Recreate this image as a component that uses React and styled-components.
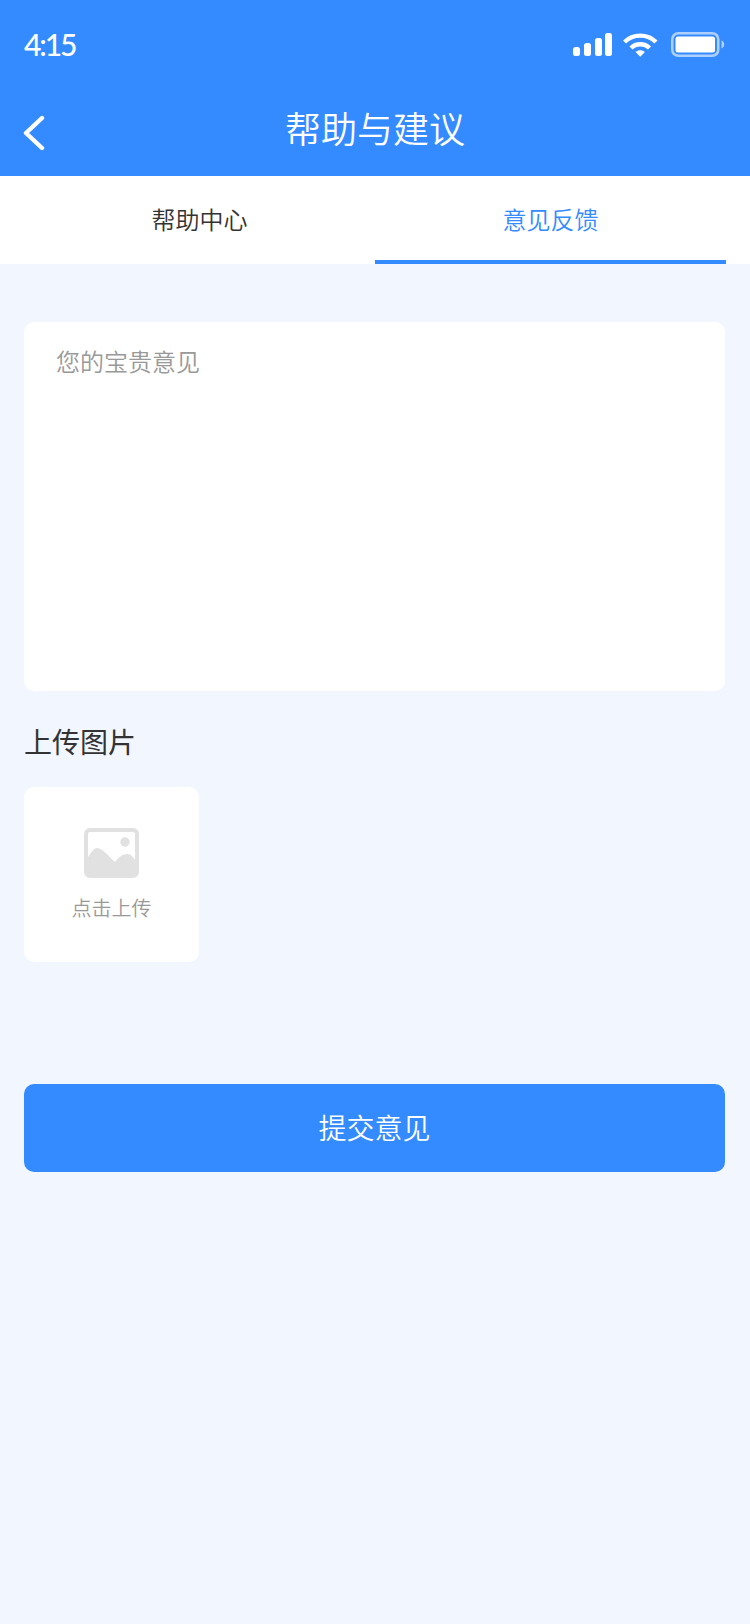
import React, { useState } from "react";
import styled, { createGlobalStyle } from "styled-components";

const Global = createGlobalStyle`
  html, body { margin: 0; padding: 0; background: #f2f6ff; }
  * { box-sizing: border-box; }
  body { font-family: "Noto Sans CJK SC", "Noto Sans", sans-serif; }
`;
const Page = styled.div`
  width: 750px; min-height: 1624px; background: #f2f6ff; display: flex; flex-direction: column;
`;
const Header = styled.header`
  height: 176px; background: #348bff; color: #fff; display: flex; flex-direction: column;
`;
const StatusBar = styled.div`
  height: 88px; padding: 0 25px 0 24px; display: flex; align-items: center; justify-content: space-between;
`;
const Time = styled.span`
  font-family: "Lato", sans-serif; font-size: 30px; font-weight: 500; letter-spacing: -2.1px; line-height: 1;
`;
const StatusIcons = styled.div`
  display: flex; align-items: center; gap: 11px; padding-top: 1px;
`;
const NavBar = styled.div`
  flex: 1; position: relative; display: flex; align-items: center; justify-content: center;
`;
const BackButton = styled.button`
  position: absolute; left: 23px; top: 27px; width: 22px; height: 36px; padding: 0; border: 0; background: none; display: flex;
`;
const Title = styled.h1`
  margin: -9px 0 0; font-size: 36px; font-weight: 350; line-height: 1.2;
`;
const Tabs = styled.nav`
  height: 88px; padding: 0 24px; background: #fff; display: grid; grid-template-columns: 1fr 1fr;
`;
const Tab = styled.button`
  border: 0; background: none; padding: 0;
  font: 350 24px "Noto Sans CJK SC", sans-serif; color: ${p => (p.$active ? "#348bff" : "#333")};
  border-bottom: 4px solid ${p => (p.$active ? "#348bff" : "transparent")};
`;
const Content = styled.main`
  padding: 58px 24px 0; display: flex; flex-direction: column;
`;
const Feedback = styled.textarea`
  display: block; width: 701px; height: 369px; border: 0; border-radius: 10px; background: #fff; resize: none; outline: none;
  padding: 25px 32px; font: 350 24px/1.2 "Noto Sans CJK SC", sans-serif; color: #333;
  &::placeholder { color: #999; opacity: 1; }
`;
const SectionTitle = styled.h2`
  margin: 32px 0 28px; font-size: 28px; font-weight: 400; line-height: 36px; color: #333;
`;
const Upload = styled.button`
  width: 175px; height: 175px; border: 0; padding: 41px 0 0; border-radius: 10px; background: #fff;
  display: flex; flex-direction: column; align-items: center; gap: 16px;
`;
const UploadHint = styled.span`
  font: 350 20px/28px "Noto Sans CJK SC", sans-serif; color: #999;
`;
const Submit = styled.button`
  margin-top: 122px; height: 88px; width: 701px; border: 0; border-radius: 10px; background: #348bff; color: #fff;
  font: 350 28px "Noto Sans CJK SC", sans-serif; padding: 0 0 3px;
`;

const Signal = () => (
  <svg width="39" height="24" viewBox="0 0 39 24" fill="#fff">
    <rect x="0" y="14" width="7" height="9" rx="2.5" />
    <rect x="11" y="10" width="7" height="13" rx="2.5" />
    <rect x="22" y="5" width="7" height="18" rx="2.5" />
    <rect x="32" y="0" width="7" height="23" rx="2.5" />
  </svg>
);
const Wifi = () => (
  <svg width="37" height="26" viewBox="0 0 37 26" fill="none" stroke="#fff" strokeWidth="4.400">
    <path d="M1.500 10C10 1.500 24.500 1.500 33 10" />
    <path d="M8 16C13 11 21.500 11 26.500 16" />
    <path d="M12.600 20 17.250 24.800l4.650-4.800C19.200 17.500 15.300 17.500 12.600 20Z" fill="#fff" stroke="none" />
  </svg>
);
const Battery = () => (
  <svg width="54" height="25" viewBox="0 0 54 25" fill="none">
    <rect x="1.250" y="1.250" width="46" height="22.500" rx="6" stroke="#fff" strokeOpacity=".6" strokeWidth="2.500" />
    <rect x="4.500" y="4.500" width="39.500" height="16" rx="2.500" fill="#fff" />
    <path d="M50.500 8.500c1.800.6 2.700 2.200 2.700 4s-.9 3.400-2.700 4z" fill="#fff" fillOpacity=".6" />
  </svg>
);
const PictureIcon = () => (
  <svg width="55" height="50" viewBox="0 0 55 50">
    <path fillRule="evenodd" fill="#e1e1e1" d="M6 0h43a6 6 0 0 1 6 6v38a6 6 0 0 1-6 6H6a6 6 0 0 1-6-6V6a6 6 0 0 1 6-6Zm0 4a2 2 0 0 0-2 2v23C7 26 9 20 13 20C19 20 26 30 31 34C34 30 38 26 43 26C47 26 49 29 51 32V6a2 2 0 0 0-2-2Z" />
    <circle cx="41" cy="14" r="4.700" fill="#e1e1e1" />
  </svg>
);

export default function App() {
  const [tab, setTab] = useState(1);
  return (
    <Page>
      <Global />
      <Header>
        <StatusBar>
          <Time>4:15</Time>
          <StatusIcons>
            <Signal />
            <Wifi />
            <Battery />
          </StatusIcons>
        </StatusBar>
        <NavBar>
          <BackButton aria-label="返回">
            <svg width="22" height="36" viewBox="0 0 22 36" fill="none" stroke="#fff" strokeWidth="4.400" strokeLinecap="round" strokeLinejoin="round">
              <path d="M19 3 3 18l16 15" />
            </svg>
          </BackButton>
          <Title>帮助与建议</Title>
        </NavBar>
      </Header>
      <Tabs>
        <Tab $active={tab === 0} onClick={() => setTab(0)}>帮助中心</Tab>
        <Tab $active={tab === 1} onClick={() => setTab(1)}>意见反馈</Tab>
      </Tabs>
      <Content>
        <Feedback placeholder="您的宝贵意见" />
        <SectionTitle>上传图片</SectionTitle>
        <Upload>
          <PictureIcon />
          <UploadHint>点击上传</UploadHint>
        </Upload>
        <Submit>提交意见</Submit>
      </Content>
    </Page>
  );
}
